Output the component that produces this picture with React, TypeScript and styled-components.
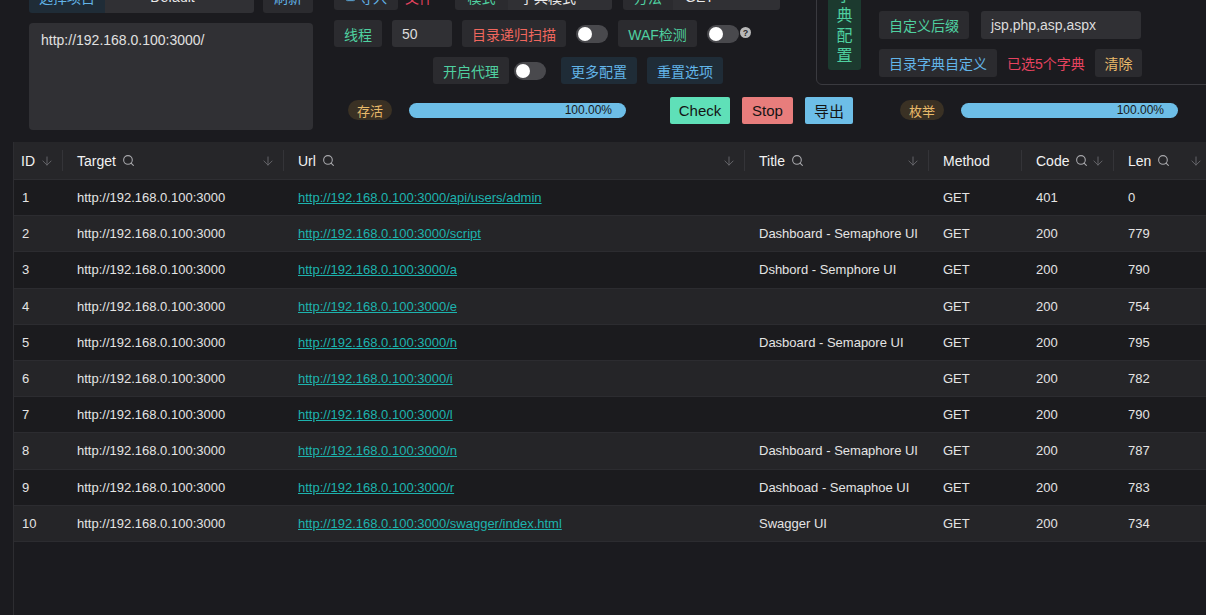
import React from "react";
import styled, { createGlobalStyle } from "styled-components";
import { ArrowDown, Search, ChevronDown, Upload } from "lucide-react";

const FONT = `"Liberation Sans", "Noto Sans CJK SC", sans-serif`;

const C = {
  bg: "#1b1b1f",
  panel: "#303034",
  btn: "#2b2b2f",
  blueBg: "#1f2c37",
  green: "#4fd0a0",
  blue: "#62b4e8",
  red: "#f0675e",
  pink: "#e6435f",
  yellow: "#e9ba6a",
  text: "#e4e4e4",
};

const Global = createGlobalStyle`
  html, body { margin: 0; padding: 0; background: ${C.bg}; overflow: hidden; }
  body { font-family: ${FONT}; color: ${C.text}; }
  * { box-sizing: border-box; }
`;

const Page = styled.div`
  width: 1206px;
  height: 615px;
  overflow: hidden;
  display: flex;
  flex-direction: column;
`;

const Top = styled.div`
  display: flex;
  margin-top: -30px;
`;

const LeftCol = styled.div`
  margin-left: 29px;
  width: 284px;
  padding-top: 11px;
  display: flex;
  flex-direction: column;
  gap: 10px;
`;

const Row = styled.div<{ $gap?: number; $pl?: number; $h?: number }>`
  display: flex;
  align-items: center;
  gap: ${(p) => p.$gap ?? 10}px;
  padding-left: ${(p) => p.$pl ?? 0}px;
  height: ${(p) => p.$h ?? 27}px;
`;

const Group = styled.div`
  display: flex;
  height: 100%;
`;

const Tag = styled.div<{ $c: string; $bg?: string; $w?: number; $join?: "left" | "right" }>`
  display: flex;
  align-items: center;
  justify-content: center;
  gap: 3px;
  height: 100%;
  padding: 0 10px;
  ${(p) => (p.$w ? `width: ${p.$w}px;` : "")}
  background: ${(p) => p.$bg ?? C.btn};
  color: ${(p) => p.$c};
  font-size: 14px;
  border-radius: ${(p) =>
    p.$join === "left" ? "3px 0 0 3px" : p.$join === "right" ? "0 3px 3px 0" : "3px"};
  white-space: nowrap;
  flex-shrink: 0;
`;

const PlainText = styled.span<{ $c: string }>`
  color: ${(p) => p.$c};
  font-size: 14px;
  white-space: nowrap;
`;

const SelectBox = styled.div<{ $w: number; $center?: boolean }>`
  width: ${(p) => p.$w}px;
  height: 100%;
  display: flex;
  align-items: center;
  padding: 0 12px;
  background: ${C.panel};
  color: #e8e8e8;
  font-size: 14px;
  border-radius: 0 3px 3px 0;
  span {
    flex: 1;
    text-align: ${(p) => (p.$center ? "center" : "left")};
  }
`;

const InputBox = styled.div<{ $w: number }>`
  width: ${(p) => p.$w}px;
  height: 100%;
  display: flex;
  align-items: center;
  padding: 0 10px;
  background: ${C.panel};
  color: #dcdcdc;
  font-size: 14px;
  border-radius: 3px;
`;

const TextArea = styled.div`
  height: 107px;
  background: ${C.panel};
  border-radius: 4px;
  padding: 9px 12px;
  color: #e0e0e0;
  font-size: 14px;
`;

const RightArea = styled.div`
  margin-left: 21px;
  display: flex;
  flex-direction: column;
  flex: 1;
`;

const Upper = styled.div`
  display: flex;
  align-items: flex-start;
`;

const MidCol = styled.div`
  width: 482px;
  padding-top: 13px;
  display: flex;
  flex-direction: column;
  gap: 10px;
`;

const Toggle = styled.div`
  width: 32px;
  height: 18px;
  border-radius: 9px;
  background: #49494d;
  padding: 2px;
  flex-shrink: 0;
  &::before {
    content: "";
    display: block;
    width: 14px;
    height: 14px;
    border-radius: 50%;
    background: #ffffff;
  }
`;

const Help = styled.span`
  align-self: flex-start;
  margin-top: 7px;
  margin-left: -9px;
  width: 11px;
  height: 11px;
  border-radius: 50%;
  background: #b8b8b8;
  color: #2a2a2a;
  font-size: 9px;
  font-weight: 700;
  display: flex;
  align-items: center;
  justify-content: center;
`;

const DictBox = styled.div`
  width: 400px;
  height: 115px;
  border: 1px solid #3a3a3f;
  border-radius: 6px;
  padding: 0 0 7px 11px;
  display: flex;
  align-items: flex-end;
  gap: 18px;
`;

const VLabel = styled.div`
  width: 33px;
  margin-bottom: 7px;
  padding: 6px 0 4px;
  background: #1c3a2f;
  color: ${C.green};
  border-radius: 3px;
  font-size: 16px;
  line-height: 20px;
  display: flex;
  flex-direction: column;
  align-items: center;
`;

const DictRows = styled.div`
  display: flex;
  flex-direction: column;
  gap: 10px;
`;

const StatusRow = styled.div`
  margin-top: 11px;
  padding-left: 14px;
  height: 28px;
  display: flex;
  align-items: center;
`;

const Pill = styled.div`
  height: 20px;
  padding: 0 9px;
  border-radius: 10px;
  background: #3a3124;
  color: ${C.yellow};
  font-size: 13px;
  display: flex;
  align-items: center;
  flex-shrink: 0;
`;

const Progress = styled.div<{ $ml: number }>`
  margin-left: ${(p) => p.$ml}px;
  width: 217px;
  height: 15px;
  border-radius: 8px;
  background: #6dbee7;
  color: #1a1a1a;
  font-size: 12px;
  display: flex;
  align-items: center;
  justify-content: flex-end;
  padding-right: 14px;
  flex-shrink: 0;
`;

const ActionBtn = styled.div<{ $bg: string; $ml: number; $w: number }>`
  margin-left: ${(p) => p.$ml}px;
  width: ${(p) => p.$w}px;
  height: 27px;
  background: ${(p) => p.$bg};
  color: #141414;
  font-size: 15px;
  border-radius: 2px;
  display: flex;
  align-items: center;
  justify-content: center;
  flex-shrink: 0;
`;

/* ---------- table ---------- */

const COLS = "49px 221px 461px 184px 93px 92px 98px";

const Table = styled.div`
  margin-top: 12px;
  margin-left: 13px;
  flex: 1;
  border-left: 1px solid #2d2d31;
  display: flex;
  flex-direction: column;
`;

const HeadRow = styled.div`
  display: grid;
  grid-template-columns: ${COLS};
  height: 38px;
  background: #262629;
  border-bottom: 1px solid #2e2e32;
`;

const HeadCell = styled.div<{ $first?: boolean; $last?: boolean }>`
  position: relative;
  display: flex;
  align-items: center;
  padding: 0 9px 0 ${(p) => (p.$first ? 7 : 14)}px;
  font-size: 14px;
  color: #f2f2f2;
  ${(p) =>
    p.$last
      ? ""
      : `&::after {
    content: "";
    position: absolute;
    right: 0;
    top: 8px;
    bottom: 8px;
    width: 1px;
    background: #343438;
  }`}
`;

const SearchIco = styled(Search)`
  margin-left: 6px;
  color: #a8a8ac;
`;

const SortIco = styled(ArrowDown)`
  margin-left: auto;
  color: #6c6c70;
`;

const BodyRow = styled.div<{ $alt: boolean }>`
  display: grid;
  grid-template-columns: ${COLS};
  height: 36.2px;
  background: ${(p) => (p.$alt ? "#252528" : "#1b1b1e")};
  border-bottom: 1px solid #2c2c30;
`;

const Cell = styled.div<{ $first?: boolean }>`
  display: flex;
  align-items: center;
  padding-left: ${(p) => (p.$first ? 8 : 14)}px;
  font-size: 13px;
  color: ${C.text};
  white-space: nowrap;
  overflow: hidden;
`;

const Link = styled.a`
  color: #1db3ae;
  text-decoration: underline;
  font-size: 13px;
`;

const BASE = "http://192.168.0.100:3000";

const rows = [
  { path: "/api/users/admin", title: "", code: 401, len: 0 },
  { path: "/script", title: "Dashboard - Semaphore UI", code: 200, len: 779 },
  { path: "/a", title: "Dshbord - Semphore UI", code: 200, len: 790 },
  { path: "/e", title: "", code: 200, len: 754 },
  { path: "/h", title: "Dasboard - Semapore UI", code: 200, len: 795 },
  { path: "/i", title: "", code: 200, len: 782 },
  { path: "/l", title: "", code: 200, len: 790 },
  { path: "/n", title: "Dashboard - Semaphore UI", code: 200, len: 787 },
  { path: "/r", title: "Dashboad - Semaphoe UI", code: 200, len: 783 },
  { path: "/swagger/index.html", title: "Swagger UI", code: 200, len: 734 },
];

const headers: { name: string; search?: boolean; sort?: boolean }[] = [
  { name: "ID", sort: true },
  { name: "Target", search: true, sort: true },
  { name: "Url", search: true, sort: true },
  { name: "Title", search: true, sort: true },
  { name: "Method" },
  { name: "Code", search: true, sort: true },
  { name: "Len", search: true, sort: true },
];

export default function App() {
  return (
    <Page>
      <Global />
      <Top>
        <LeftCol>
          <Row $h={32} $gap={9}>
            <Group>
              <Tag $c={C.blue} $bg={C.blueBg} $w={76} $join="left">选择项目</Tag>
              <SelectBox $w={149} $center>
                <span>Default</span>
                <ChevronDown size={14} color="#8a8a8e" />
              </SelectBox>
            </Group>
            <Tag $c={C.blue} $w={50}>刷新</Tag>
          </Row>
          <TextArea>http://192.168.0.100:3000/</TextArea>
        </LeftCol>

        <RightArea>
          <Upper>
            <MidCol>
              <Row $gap={7}>
                <Tag $c={C.blue} $w={64}>
                  <Upload size={11} />
                  导入
                </Tag>
                <PlainText $c={C.pink} style={{ width: 43 }}>文件</PlainText>
                <Group>
                  <Tag $c={C.green} $w={53} $join="left">模式</Tag>
                  <SelectBox $w={104}><span>字典模式</span></SelectBox>
                </Group>
                <Group style={{ marginLeft: 4 }}>
                  <Tag $c={C.green} $w={50} $join="left">方法</Tag>
                  <SelectBox $w={107}><span>GET</span></SelectBox>
                </Group>
              </Row>
              <Row>
                <Tag $c={C.green} $w={48}>线程</Tag>
                <InputBox $w={60}>50</InputBox>
                <Tag $c={C.red} $w={104}>目录递归扫描</Tag>
                <Toggle />
                <Tag $c={C.green} $w={79}>WAF检测</Tag>
                <Toggle />
                <Help>?</Help>
              </Row>
              <Row $pl={99} $gap={5}>
                <Tag $c={C.green} $w={76}>开启代理</Tag>
                <Toggle />
                <Tag $c={C.blue} $bg={C.blueBg} $w={76} style={{ marginLeft: 10 }}>更多配置</Tag>
                <Tag $c={C.blue} $bg={C.blueBg} $w={76} style={{ marginLeft: 5 }}>重置选项</Tag>
              </Row>
            </MidCol>

            <DictBox>
              <VLabel>
                <span>字</span>
                <span>典</span>
                <span>配</span>
                <span>置</span>
              </VLabel>
              <DictRows>
                <Row $h={28} $gap={12}>
                  <Tag $c={C.green} $w={90}>自定义后缀</Tag>
                  <InputBox $w={160}>jsp,php,asp,aspx</InputBox>
                </Row>
                <Row $h={28} $gap={10}>
                  <Tag $c={C.blue} $w={118}>目录字典自定义</Tag>
                  <PlainText $c={C.pink} style={{ width: 78 }}>已选5个字典</PlainText>
                  <Tag $c={C.yellow} $w={47}>清除</Tag>
                </Row>
              </DictRows>
            </DictBox>
          </Upper>

          <StatusRow>
            <Pill>存活</Pill>
            <Progress $ml={17}>100.00%</Progress>
            <ActionBtn $bg="#5fe0b8" $ml={44} $w={60}>Check</ActionBtn>
            <ActionBtn $bg="#e87d7c" $ml={12} $w={51}>Stop</ActionBtn>
            <ActionBtn $bg="#6dbee7" $ml={12} $w={48}>导出</ActionBtn>
            <Pill style={{ marginLeft: 47 }}>枚举</Pill>
            <Progress $ml={17}>100.00%</Progress>
          </StatusRow>
        </RightArea>
      </Top>

      <Table>
        <HeadRow>
          {headers.map((h, i) => (
            <HeadCell key={h.name} $first={i === 0} $last={i === headers.length - 1}>
              {h.name}
              {h.search && <SearchIco size={13} strokeWidth={2} />}
              {h.sort && <SortIco size={14} strokeWidth={1.5} />}
            </HeadCell>
          ))}
        </HeadRow>
        {rows.map((r, i) => (
          <BodyRow key={i} $alt={i % 2 === 1}>
            <Cell $first>{i + 1}</Cell>
            <Cell>{BASE}</Cell>
            <Cell>
              <Link>{BASE + r.path}</Link>
            </Cell>
            <Cell>{r.title}</Cell>
            <Cell>GET</Cell>
            <Cell>{r.code}</Cell>
            <Cell>{r.len}</Cell>
          </BodyRow>
        ))}
      </Table>
    </Page>
  );
}
